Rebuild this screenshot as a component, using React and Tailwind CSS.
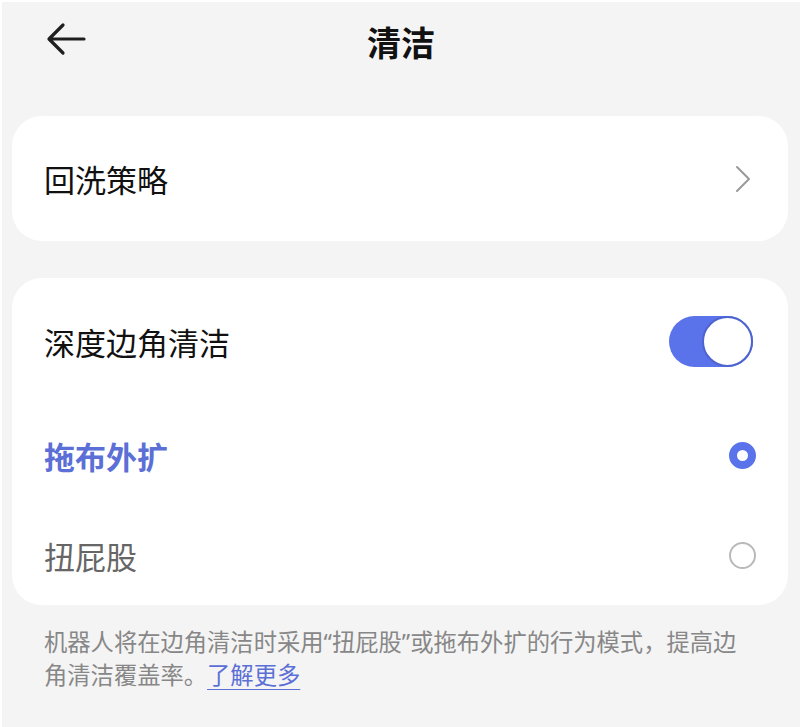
import React from "react";

const font = { fontFamily: '"Noto Sans CJK SC", "Noto Sans", sans-serif' };
const latin = { fontFamily: '"Noto Sans", sans-serif' };

export default function App() {
  return (
    <div
      className="w-[800px] h-[727px] bg-[#f4f4f4] overflow-hidden border-t-2 border-l-2 border-white"
      style={font}
    >
      <div className="relative h-[80px] flex items-center justify-center">
        <svg
          className="absolute left-[44px] top-[20px]"
          width="40"
          height="34"
          viewBox="0 0 40 34"
          fill="none"
          stroke="#1f1f1f"
          strokeWidth="3.2"
          strokeLinecap="round"
          strokeLinejoin="round"
        >
          <path d="M38 17H4M17 3L3 17l14 14" />
        </svg>
        <span className="text-[34px] font-bold text-[#111] leading-none">清洁</span>
      </div>

      <div className="ml-[10px] mr-[12px] mt-[34px] h-[125px] bg-white rounded-[30px] flex items-center justify-between pl-[32px] pr-[37px]">
        <span className="text-[31px] text-[#111] leading-none">回洗策略</span>
        <svg width="16" height="28" viewBox="0 0 16 28" fill="none" stroke="#9a9a9a" strokeWidth="2" strokeLinecap="round" strokeLinejoin="round">
          <path d="M2 2l12 12L2 26" />
        </svg>
      </div>

      <div className="ml-[10px] mr-[12px] mt-[37px] bg-white rounded-[30px] flex flex-col">
        <div className="h-[127px] flex items-center justify-between pl-[32px] pr-[35px]">
          <span className="text-[31px] text-[#111] leading-none">深度边角清洁</span>
          <div className="w-[84px] h-[51px] rounded-full bg-[#5b73ea] relative">
            <div className="absolute right-0 top-0 w-[51px] h-[51px] rounded-full bg-white border-[2px] border-[#4d63cf]" />
          </div>
        </div>
        <div className="h-[100px] flex items-center justify-between pl-[32px] pr-[32px]">
          <span className="text-[31px] font-bold text-[#5b6fd6] leading-none">拖布外扩</span>
          <div className="w-[27px] h-[27px] rounded-full border-[8px] border-[#5b73ea] bg-white" />
        </div>
        <div className="h-[100px] flex items-center justify-between pl-[32px] pr-[32px]">
          <span className="text-[31px] text-[#666] leading-none">扭屁股</span>
          <div className="w-[27px] h-[27px] rounded-full border-[2.5px] border-[#b9b9b9] bg-white" />
        </div>
      </div>

      <p className="ml-[42px] mr-[20px] mt-[20px] text-[23.3px] leading-[32px] text-[#878787]">
        机器人将在边角清洁时采用<span style={latin}>“</span>扭屁股<span style={latin}>”</span>或拖布外扩的行为模式，提高边
        <br />
        角清洁覆盖率。<span className="text-[#5b6fd6] underline underline-offset-[5px] decoration-1">了解更多</span>
      </p>
    </div>
  );
}
